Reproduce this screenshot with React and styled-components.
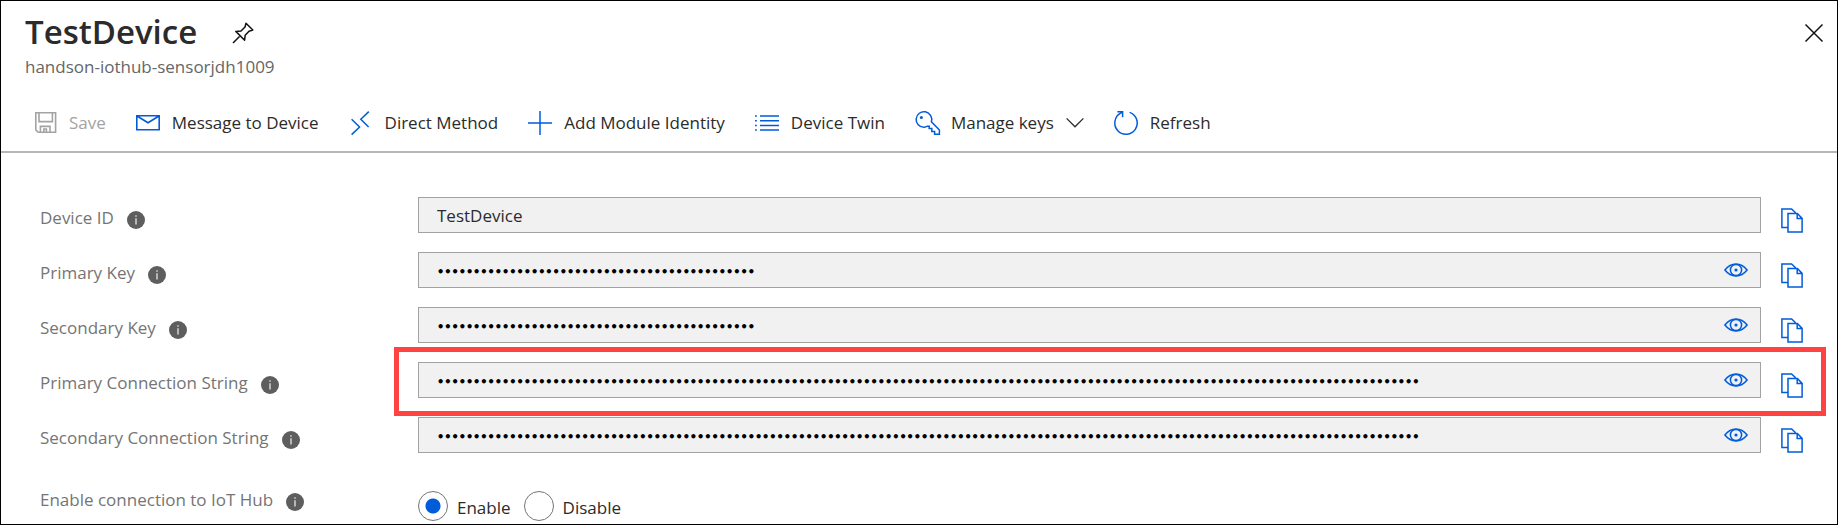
import React, { useState } from "react";
import styled, { createGlobalStyle } from "styled-components";

const BLUE = "#015cda";

const GlobalStyle = createGlobalStyle`
  *, *::before, *::after { box-sizing: border-box; }
  body {
    margin: 0;
    background: #fff;
    color: #2b2b2b;
    font: 17px/24px "Open Sans", "Noto Sans", sans-serif;
  }
  button, input { font: inherit; color: inherit; }
`;

const Blade = styled.main`
  display: flex;
  flex-direction: column;
  min-height: 100vh;
  border: 1px solid #000;
`;

const Header = styled.header`
  display: flex;
  align-items: flex-start;
  justify-content: space-between;
  padding: 10px 14px 0 24px;
`;

const TitleRow = styled.div`
  display: flex;
  align-items: center;
  gap: 35px;
`;

const Title = styled.h1`
  margin: 0;
  font-size: 33px;
  line-height: 42px;
  font-weight: 600;
`;

const Subtitle = styled.p`
  margin: 0;
  line-height: 28px;
  color: #666;
`;

const IconButton = styled.button`
  display: flex;
  flex: none;
  padding: 0;
  border: 0;
  background: none;
  color: ${(p) => p.$color || "#111"};
  cursor: pointer;
`;

const PinButton = styled(IconButton)`
  margin-top: 2px;
`;

const CloseButton = styled(IconButton)`
  margin-top: 13px;
`;

const Toolbar = styled.nav`
  display: flex;
  align-items: center;
  gap: 30px;
  margin-top: 30px;
  padding: 0 32px 16px;
  border-bottom: 2px solid #b6b6b6;
`;

const Command = styled.button`
  display: flex;
  align-items: center;
  gap: 12px;
  padding: 0;
  border: 0;
  background: none;
  white-space: nowrap;
  cursor: pointer;
  &:disabled { color: #a3a3a3; cursor: default; }
`;

const Svg = styled.svg`
  display: block;
  flex: none;
  overflow: visible;
  fill: none;
  stroke: ${(p) => p.$stroke || "currentColor"};
  stroke-width: ${(p) => p.$weight || 1.6};
`;

const Form = styled.form`
  display: flex;
  flex-direction: column;
  gap: 19px;
  padding: 44px 34px 0 39px;
`;

const Row = styled.div`
  display: flex;
  align-items: flex-start;
  height: 36px;
`;

const LabelCell = styled.div`
  display: flex;
  flex: none;
  align-items: center;
  gap: 13px;
  width: 378px;
  padding-top: 9px;
  color: #757575;
`;

const InfoBadge = styled(IconButton)`
  margin-top: 4px;
`;

const FieldCell = styled.div`
  position: relative;
  display: flex;
  flex: 1;
  gap: 20px;
  min-width: 0;
`;

const Highlight = styled.div`
  position: absolute;
  inset: -15px -23px -18px -24px;
  border: 5px solid #ff4343;
  pointer-events: none;
`;

const Field = styled.div`
  display: flex;
  flex: 1;
  align-items: center;
  min-width: 0;
  height: 36px;
  padding-right: 12px;
  border: 1px solid #a2a2a2;
  background: #f1f1f1;
`;

const TextInput = styled.input`
  flex: 1;
  min-width: 0;
  height: 34px;
  padding: 0 18px;
  border: 0;
  outline: 0;
  background: transparent;
  &[type="password"] {
    padding-top: 4px;
    color: #000;
    font-family: "DejaVu Sans Mono", monospace;
    font-size: 12px;
    font-weight: 700;
  }
`;

const CopyButton = styled(IconButton)`
  margin-top: 11px;
`;

const RadioRow = styled(Row)`
  height: 50px;
  padding-top: 16px;
`;

const RadioLabelCell = styled(LabelCell)`
  padding-top: 0;
`;

const Choices = styled.div`
  display: flex;
  gap: 13px;
  padding-top: 3px;
`;

const Choice = styled.label`
  display: flex;
  align-items: flex-end;
  gap: 9px;
  height: 30px;
  line-height: 26px;
`;

const Radio = styled.input`
  appearance: none;
  width: 30px;
  height: 30px;
  margin: 0;
  border: 1px solid #757575;
  border-radius: 50%;
  background: #fff;
  &:checked { background: radial-gradient(circle, ${BLUE} 7px, #fff 8px); }
`;

const PinIcon = () => (
  <Svg width="22" height="22" viewBox="0 0 22 22" $weight={1.5}>
    <path d="M1 21 7.5 14.5M14 1.2 20.8 8 17 9.2 13.2 13.2 12.6 18.2 3.8 9.4 9 9 13 5Z" strokeLinejoin="round" />
  </Svg>
);

const CloseIcon = () => (
  <Svg width="18" height="18" viewBox="0 0 18 18" $weight={1.5}>
    <path d="M.5.5l17 17M17.5.5l-17 17" />
  </Svg>
);

const SaveIcon = () => (
  <Svg width="24" height="24" viewBox="0 0 24 24">
    <path d="M2.8 1.8H22.6V21.2H5.2L2.8 18.8ZM6 2V10.6H19.4V2M7.4 21V15.4H17V21M10.8 21V18H13.4V21" />
  </Svg>
);

const MailIcon = () => (
  <Svg width="24" height="24" viewBox="0 0 24 24" $stroke={BLUE}>
    <path d="M.8 4.8H23.2V18.8H.8ZM1 5 12 11.8 23 5" />
  </Svg>
);

const MethodIcon = () => (
  <Svg width="24" height="24" viewBox="0 0 24 24" $stroke={BLUE} $weight={1.5}>
    <path d="M2.6 8.2 10.6 16 2.6 23.6M19.8.6 11.8 8.2 19.6 16" />
  </Svg>
);

const PlusIcon = () => (
  <Svg width="24" height="24" viewBox="0 0 24 24" $stroke={BLUE} $weight={1.5}>
    <path d="M12 0V24M0 12H24" />
  </Svg>
);

const ListIcon = () => (
  <Svg width="24" height="24" viewBox="0 0 24 24" $stroke={BLUE} $weight={1.5}>
    <path d="M5 5H24M5 9.7H24M5 14.4H24M5 19.1H24M0 5H1.8M0 9.7H1.8M0 14.4H1.8M0 19.1H1.8" />
  </Svg>
);

const KeyIcon = () => (
  <Svg width="24" height="24" viewBox="0 0 24 24" $stroke={BLUE} $weight={1.5}>
    <path d="M9 16.3A7.8 7.8 0 1 1 16.4 10.8L24.4 19V23.2H19.6V20.4H16.8V17.6H14.2V15.2H12.4L11.2 15.6Q10.2 16.2 9 16.3Z" />
    <circle cx="6.4" cy="6.4" r="1.5" fill={BLUE} stroke="none" />
  </Svg>
);

const ChevronIcon = () => (
  <Svg width="18" height="24" viewBox="0 0 18 24" $weight={1.3}>
    <path d="M.6 7.4 9 15.8 17.4 7.4" />
  </Svg>
);

const RefreshIcon = () => (
  <Svg width="24" height="24" viewBox="0 0 24 24" $stroke={BLUE} $weight={1.5}>
    <path d="M15.6 1.4A11.2 11.2 0 1 1 6.6 2.2L8.6 1M3.4 .8H8.6V6.2" />
  </Svg>
);

const InfoIcon = () => (
  <svg width="18" height="18" viewBox="0 0 18 18">
    <circle cx="9" cy="9" r="9" fill="#5e5e5e" />
    <path d="M9 4.2V5.8M9 7.2V13.4" stroke="#e6e6e6" strokeWidth="1.3" />
  </svg>
);

const EyeIcon = () => (
  <Svg width="24" height="14" viewBox="0 0 24 14" $stroke={BLUE} $weight={1.5}>
    <path d="M.9 7Q5.6 1.1 12 1.1T23.1 7Q18.4 12.9 12 12.9T.9 7Z" />
    <circle cx="12" cy="7" r="5.6" />
    <circle cx="12" cy="7" r="1.6" fill={BLUE} stroke="none" />
  </Svg>
);

const CopyIcon = () => (
  <Svg width="22" height="25" viewBox="0 0 22 25" $stroke={BLUE} $weight={1.5}>
    <path d="M7 19.6H.9V.9H10.6L14.6 4.8M7 5.6H16.4L21.1 10.4V24.1H7ZM16.2 5.8V10.6H21" />
  </Svg>
);

const commands = [
  { text: "Save", Icon: SaveIcon, disabled: true },
  { text: "Message to Device", Icon: MailIcon },
  { text: "Direct Method", Icon: MethodIcon },
  { text: "Add Module Identity", Icon: PlusIcon },
  { text: "Device Twin", Icon: ListIcon },
  { text: "Manage keys", Icon: KeyIcon, menu: true },
  { text: "Refresh", Icon: RefreshIcon },
];

const fields = [
  { id: "device-id", label: "Device ID", value: "TestDevice" },
  { id: "primary-key", label: "Primary Key", value: "x".repeat(44), secret: true },
  { id: "secondary-key", label: "Secondary Key", value: "x".repeat(44), secret: true },
  { id: "primary-connection", label: "Primary Connection String", value: "x".repeat(136), secret: true, highlighted: true },
  { id: "secondary-connection", label: "Secondary Connection String", value: "x".repeat(136), secret: true },
];

function Info({ about }) {
  return (
    <InfoBadge type="button" aria-label={`About ${about}`}>
      <InfoIcon />
    </InfoBadge>
  );
}

function FieldRow({ id, label, value, secret, highlighted }) {
  const [shown, setShown] = useState(false);
  return (
    <Row>
      <LabelCell>
        <label htmlFor={id}>{label}</label>
        <Info about={label} />
      </LabelCell>
      <FieldCell>
        <Field>
          <TextInput id={id} type={secret && !shown ? "password" : "text"} value={value} readOnly />
          {secret && (
            <IconButton type="button" aria-label={`Show ${label}`} onClick={() => setShown(!shown)}>
              <EyeIcon />
            </IconButton>
          )}
        </Field>
        <CopyButton type="button" aria-label={`Copy ${label}`}>
          <CopyIcon />
        </CopyButton>
        {highlighted && <Highlight />}
      </FieldCell>
    </Row>
  );
}

export default function App() {
  const [enabled, setEnabled] = useState(true);
  return (
    <>
      <GlobalStyle />
      <Blade>
        <Header>
          <div>
            <TitleRow>
              <Title>TestDevice</Title>
              <PinButton type="button" aria-label="Pin"><PinIcon /></PinButton>
            </TitleRow>
            <Subtitle>handson-iothub-sensorjdh1009</Subtitle>
          </div>
          <CloseButton type="button" aria-label="Close"><CloseIcon /></CloseButton>
        </Header>
        <Toolbar>
          {commands.map(({ text, Icon, disabled, menu }) => (
            <Command key={text} type="button" disabled={disabled}>
              <Icon />
              {text}
              {menu && <ChevronIcon />}
            </Command>
          ))}
        </Toolbar>
        <Form>
          {fields.map((f) => <FieldRow key={f.id} {...f} />)}
          <RadioRow role="radiogroup" aria-labelledby="connection-label">
            <RadioLabelCell>
              <span id="connection-label">Enable connection to IoT Hub</span>
              <Info about="Enable connection to IoT Hub" />
            </RadioLabelCell>
            <Choices>
              <Choice>
                <Radio type="radio" name="connection" checked={enabled} onChange={() => setEnabled(true)} />
                Enable
              </Choice>
              <Choice>
                <Radio type="radio" name="connection" checked={!enabled} onChange={() => setEnabled(false)} />
                Disable
              </Choice>
            </Choices>
          </RadioRow>
        </Form>
      </Blade>
    </>
  );
}
